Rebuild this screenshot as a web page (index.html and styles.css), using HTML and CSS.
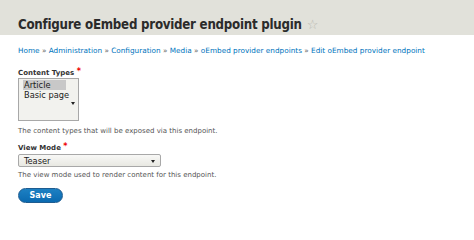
FILE: index.html
```html
<!DOCTYPE html>
<html>
<head>
<meta charset="utf-8">
<link rel="stylesheet" href="styles.css">
</head>
<body>
<header class="page-head">
  <h1 class="title">Configure oEmbed provider endpoint plugin<span class="star">☆</span></h1>
</header>
<main class="content">
  <nav class="crumbs">
    <a href="#">Home</a> » <a href="#">Administration</a> » <a href="#">Configuration</a> » <a href="#">Media</a> » <a href="#">oEmbed provider endpoints</a> » <a href="#">Edit oEmbed provider endpoint</a>
  </nav>
  <div class="field">
    <div class="label">Content Types <span class="req">*</span></div>
    <div class="multi">
      <div class="opt sel">Article</div>
      <div class="opt">Basic page</div>
      <span class="arrow multi-arrow"></span>
    </div>
    <div class="desc">The content types that will be exposed via this endpoint.</div>
  </div>
  <div class="field">
    <div class="label">View Mode <span class="req">*</span></div>
    <div class="select">
      <span>Teaser</span>
      <span class="arrow"></span>
    </div>
    <div class="desc">The view mode used to render content for this endpoint.</div>
  </div>
  <button class="save">Save</button>
</main>
</body>
</html>
```
FILE: styles.css
```css
html, body { margin: 0; padding: 0; background: #fff; }
body { font-family: "DejaVu Sans", Verdana, sans-serif; color: #333; width: 474px; height: 213px; overflow: hidden; }
.page-head { background: #e1e1da; height: 35px; box-sizing: border-box; padding: 18px 0 0 18px; }
.title { margin: 0; font-family: "DejaVu Sans Condensed", "DejaVu Sans", sans-serif; font-size: 13.2px; font-weight: bold; line-height: 14px; color: #2b2b2b; letter-spacing: -0.25px; }
.star { font-family: "DejaVu Sans", sans-serif; font-weight: normal; color: #b8b8b0; font-size: 13px; margin-left: 5px; letter-spacing: 0; }
.content { padding: 0 18px; }
.crumbs { font-size: 7.3px; line-height: 10px; margin-top: 11px; color: #666; white-space: nowrap; }
.crumbs a { color: #0074bd; text-decoration: none; }
.field { margin-top: 12px; }
.field + .field { margin-top: 7px; }
.label { font-size: 7px; font-weight: bold; line-height: 10px; color: #333; }
.req { color: #e00; font-size: 8px; position: relative; top: -1px; }
.multi { position: relative; margin-top: 0; width: 61px; height: 43px; box-sizing: border-box; border: 1px solid #a8a8a8; background: #f2f2ee; padding: 1px 0 0 4px; }
.opt { font-family: "DejaVu Sans Condensed", "DejaVu Sans", sans-serif; font-size: 9.2px; line-height: 10px; color: #1a1a1a; padding-left: 1px; width: 42px; white-space: nowrap; }
.opt.sel { background: #c8c8c8; }
.arrow { position: absolute; width: 0; height: 0; border-left: 2px solid transparent; border-right: 2px solid transparent; border-top: 3px solid #222; }
.multi-arrow { right: 3px; top: 23px; }
.desc { font-size: 7px; line-height: 10px; color: #555; margin-top: 5px; }
.select { position: relative; margin-top: 1px; width: 143px; height: 13px; box-sizing: border-box; border: 1px solid #a8a8a8; border-radius: 2px; background: linear-gradient(#f8f8f6, #e8e8e2); font-family: "DejaVu Sans Condensed", "DejaVu Sans", sans-serif; font-size: 9.2px; line-height: 11px; padding-left: 5px; color: #1a1a1a; }
.select .arrow { right: 5px; top: 5px; }
.field + .field .desc { margin-top: 3px; }
.save { display: block; margin-top: 8px; width: 45px; height: 15px; border: 1px solid #1e5c90; border-radius: 8px; background: linear-gradient(#1d80c3, #0a6ab0); color: #fff; font-family: "DejaVu Sans", Verdana, sans-serif; font-size: 8px; font-weight: bold; padding: 0; line-height: 13px; }
```
